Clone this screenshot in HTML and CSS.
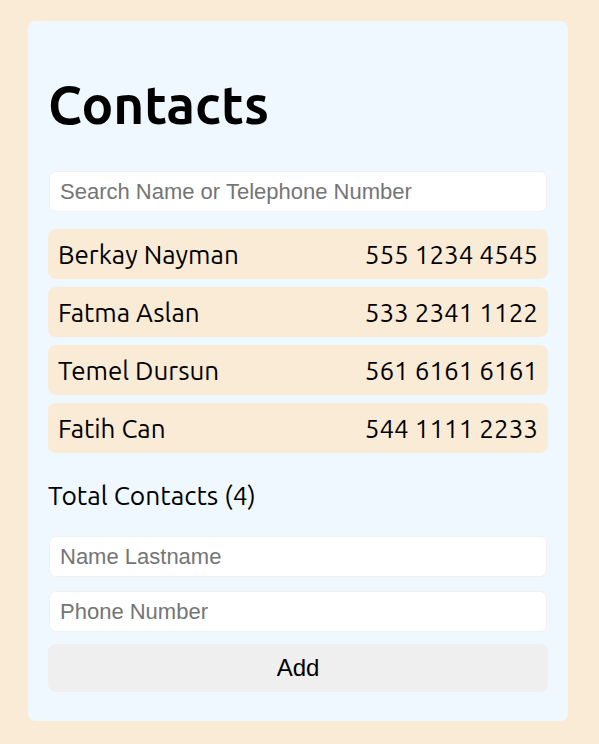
FILE: index.html
```html
<!DOCTYPE html>
<html lang="en">
<head>
<meta charset="utf-8">
<title>Contacts</title>
<link rel="stylesheet" href="styles.css">
</head>
<body>
<main class="card">
  <h1 class="title">Contacts</h1>
  <input class="field search" type="text" placeholder="Search Name or Telephone Number">
  <ul class="list">
    <li class="row"><span>Berkay Nayman</span><span>555 1234 4545</span></li>
    <li class="row"><span>Fatma Aslan</span><span>533 2341 1122</span></li>
    <li class="row"><span>Temel Dursun</span><span>561 6161 6161</span></li>
    <li class="row"><span>Fatih Can</span><span>544 1111 2233</span></li>
  </ul>
  <p class="total">Total Contacts (4)</p>
  <form class="form">
    <input class="field" type="text" placeholder="Name Lastname">
    <input class="field" type="text" placeholder="Phone Number">
    <button class="add" type="button">Add</button>
  </form>
</main>
</body>
</html>
```
FILE: styles.css
```css
html, body {
  margin: 0;
  padding: 0;
  background: #faebd7;
}
body {
  padding: 21px 0 21px 28px;
  font-family: Ubuntu, "Noto Sans", sans-serif;
  color: #000;
}
.card {
  width: 540px;
  box-sizing: border-box;
  background: #f0f8ff;
  border-radius: 8px;
  padding: 20px 20px 29px;
  display: flex;
  flex-direction: column;
}
.title {
  margin: 34px 0 0;
  font-size: 53px;
  line-height: 60px;
  font-weight: 700;
}
.field {
  box-sizing: border-box;
  margin: 0 1px;
  height: 41px;
  padding: 6px 10px;
  border: 1px solid #f0f0f0;
  border-radius: 7px;
  background: #fff;
  font-family: "Liberation Sans", Arial, sans-serif;
  font-size: 22px;
  outline: none;
}
.field::placeholder {
  color: #757575;
}
.search {
  margin-top: 36px;
}
.list {
  list-style: none;
  margin: 17px 0 0;
  padding: 0;
  display: flex;
  flex-direction: column;
  gap: 8px;
}
.row {
  display: flex;
  justify-content: space-between;
  align-items: center;
  height: 50px;
  box-sizing: border-box;
  padding: 0 10px;
  background: #faebd7;
  border-radius: 8px;
  font-size: 26px;
}
.total {
  margin: 26px 0 0;
  font-size: 26.4px;
  line-height: 32px;
}
.form {
  margin-top: 25px;
  display: flex;
  flex-direction: column;
}
.form .field + .field {
  margin-top: 14px;
}
.add {
  margin-top: 12px;
  height: 48px;
  flex: 0 0 48px;
  border: none;
  border-radius: 8px;
  background: #efefef;
  font-family: "Liberation Sans", Arial, sans-serif;
  font-size: 24px;
  color: #000;
}
```
